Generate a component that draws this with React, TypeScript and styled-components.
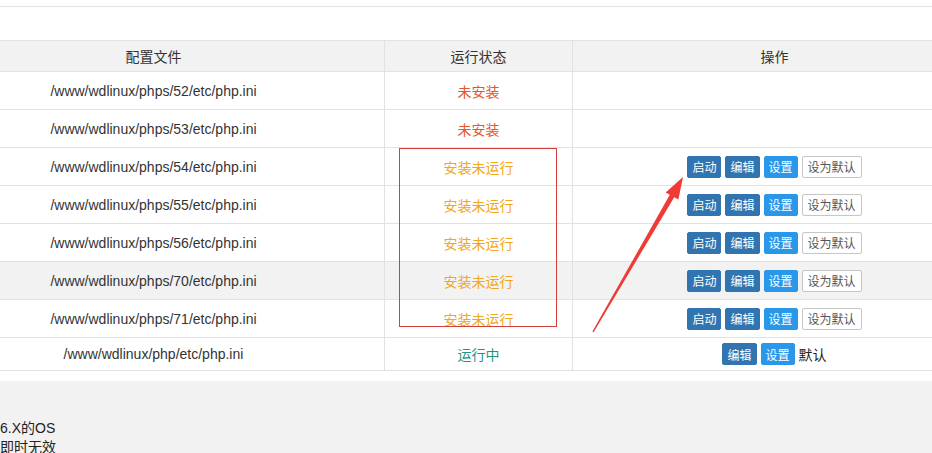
import React from "react";
import styled, { createGlobalStyle } from "styled-components";

const GlobalStyle = createGlobalStyle`
  html, body {
    margin: 0;
    padding: 0;
    background: #fff;
    overflow: hidden;
  }
  body {
    font-family: "Liberation Sans", "Noto Sans CJK SC", sans-serif;
    color: #333;
  }
`;

const Page = styled.div`
  position: relative;
  width: 932px;
  height: 453px;
  overflow: hidden;
  display: flex;
  flex-direction: column;
`;

const TopBar = styled.div`
  height: 6px;
  border-bottom: 1px solid #e4e4e4;
  flex: none;
`;

const Spacer = styled.div`
  height: 33px;
  flex: none;
`;

const TableWrap = styled.div`
  margin-left: -78px;
  width: 1054px;
  flex: none;
`;

const Table = styled.table`
  width: 100%;
  border-collapse: collapse;
  table-layout: fixed;
  font-size: 14px;
`;

const Th = styled.th`
  height: 30px;
  padding: 0;
  background: #f2f2f2;
  border: 1px solid #e2e2e2;
  font-weight: normal;
  color: #333;
  text-align: center;
`;

const Tr = styled.tr<{ $hl?: boolean }>`
  background: ${(p) => (p.$hl ? "#f2f2f2" : "#fff")};
`;

const Td = styled.td<{ $h: number }>`
  height: ${(p) => p.$h}px;
  padding: 0;
  border: 1px solid #e2e2e2;
  text-align: center;
  vertical-align: middle;
  color: #333;
`;

const Status = styled.span<{ $kind: "none" | "stopped" | "running" }>`
  color: ${(p) =>
    p.$kind === "none" ? "#e6552c" : p.$kind === "stopped" ? "#f1a71c" : "#1f9583"};
`;

const Actions = styled.div`
  display: inline-flex;
  align-items: center;
  gap: 4px;
`;

const Btn = styled.span<{ $variant: "dark" | "light" | "plain" }>`
  display: inline-flex;
  align-items: center;
  justify-content: center;
  box-sizing: border-box;
  height: 22px;
  padding: 0 ${(p) => (p.$variant === "plain" ? 5 : 4)}px;
  font-size: 12px;
  border-radius: 2px;
  border: 1px solid
    ${(p) => (p.$variant === "dark" ? "#3174b0" : p.$variant === "light" ? "#2a97e8" : "#c6c6c6")};
  background: ${(p) =>
    p.$variant === "dark" ? "#3174b0" : p.$variant === "light" ? "#2a97e8" : "#fff"};
  color: ${(p) => (p.$variant === "plain" ? "#555" : "#fff")};
`;

const DefaultLabel = styled.span`
  font-size: 14px;
  color: #222;
`;

const Notes = styled.div`
  margin-top: 10px;
  flex: 1;
  background: #f2f2f2;
  padding-top: 38px;
  font-size: 14px;
  line-height: 19px;
  color: #222;
`;

const NoteLine = styled.div`
  white-space: nowrap;
`;

const MarkBox = styled.div`
  position: absolute;
  left: 399px;
  top: 148px;
  width: 156px;
  height: 177px;
  border: 1px solid #d0403c;
  pointer-events: none;
`;

const ArrowLayer = styled.svg`
  position: absolute;
  left: 0;
  top: 0;
  pointer-events: none;
`;

type Kind = "none" | "stopped" | "running";

const rows: { path: string; kind: Kind }[] = [
  { path: "/www/wdlinux/phps/52/etc/php.ini", kind: "none" },
  { path: "/www/wdlinux/phps/53/etc/php.ini", kind: "none" },
  { path: "/www/wdlinux/phps/54/etc/php.ini", kind: "stopped" },
  { path: "/www/wdlinux/phps/55/etc/php.ini", kind: "stopped" },
  { path: "/www/wdlinux/phps/56/etc/php.ini", kind: "stopped" },
  { path: "/www/wdlinux/phps/70/etc/php.ini", kind: "stopped" },
  { path: "/www/wdlinux/phps/71/etc/php.ini", kind: "stopped" },
  { path: "/www/wdlinux/php/etc/php.ini", kind: "running" },
];

const statusText: Record<Kind, string> = {
  none: "未安装",
  stopped: "安装未运行",
  running: "运行中",
};

export default function App() {
  return (
    <>
      <GlobalStyle />
      <Page>
        <TopBar />
        <Spacer />
        <TableWrap>
          <Table>
            <colgroup>
              <col style={{ width: 462 }} />
              <col style={{ width: 188 }} />
              <col style={{ width: 404 }} />
            </colgroup>
            <thead>
              <tr>
                <Th>配置文件</Th>
                <Th>运行状态</Th>
                <Th>操作</Th>
              </tr>
            </thead>
            <tbody>
              {rows.map((r, i) => {
                const h = r.kind === "running" ? 32 : 37;
                return (
                  <Tr key={r.path} $hl={i === 5}>
                    <Td $h={h}>{r.path}</Td>
                    <Td $h={h}>
                      <Status $kind={r.kind}>{statusText[r.kind]}</Status>
                    </Td>
                    <Td $h={h}>
                      {r.kind === "stopped" && (
                        <Actions>
                          <Btn $variant="dark">启动</Btn>
                          <Btn $variant="dark">编辑</Btn>
                          <Btn $variant="light">设置</Btn>
                          <Btn $variant="plain">设为默认</Btn>
                        </Actions>
                      )}
                      {r.kind === "running" && (
                        <Actions>
                          <Btn $variant="dark">编辑</Btn>
                          <Btn $variant="light">设置</Btn>
                          <DefaultLabel>默认</DefaultLabel>
                        </Actions>
                      )}
                    </Td>
                  </Tr>
                );
              })}
            </tbody>
          </Table>
        </TableWrap>
        <Notes>
          <NoteLine>6.X的OS</NoteLine>
          <NoteLine>即时无效</NoteLine>
        </Notes>
        <MarkBox />
        <ArrowLayer width="932" height="453" viewBox="0 0 932 453">
          <polygon
            fill="#ef3a36"
            points="593.6,332.3 674.2,197.3 678.4,199.6 683,177 665.7,192.4 669.8,194.7 592.4,331.6"
          />
        </ArrowLayer>
      </Page>
    </>
  );
}
